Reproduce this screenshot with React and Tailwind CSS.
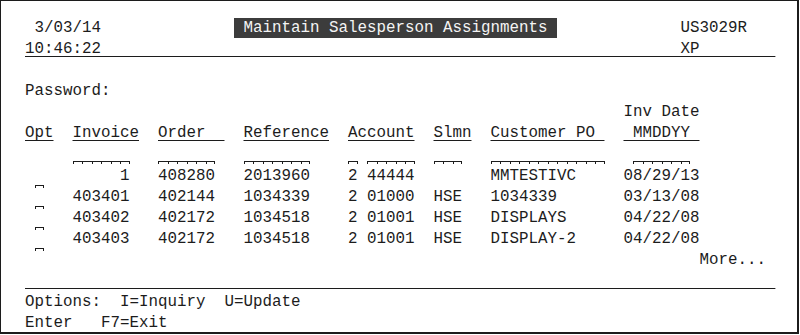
import React from "react";

// 5250-style green-screen grid: 9.5px per column, 21.1px per row
const line = (segs) => {
  let s = "";
  for (const [col, text] of segs) s = s.padEnd(col) + text;
  return s;
};

function Row({ children }) {
  return <div className="h-[21.1px] leading-[21.1px] whitespace-pre">{children}</div>;
}

function U({ children }) {
  return <span className="underline decoration-1 underline-offset-[3px]">{children}</span>;
}

// input field with column separator ticks
function Ticks({ n, top = "pt-[16px]" }) {
  return (
    <span className={`inline-flex h-[21.1px] align-top items-start ${top}`}>
      {Array.from({ length: n }).map((_, i) => (
        <span
          key={i}
          className={`h-[3px] w-[9.5px] border-t border-l border-[#1c1c1c] ${i === n - 1 ? "border-r" : ""}`}
        />
      ))}
    </span>
  );
}

const data = [
  ["     1", "408280", "2013960", "2 44444", "", "MMTESTIVC", "08/29/13"],
  ["403401", "402144", "1034339", "2 01000", "HSE", "1034339", "03/13/08"],
  ["403402", "402172", "1034518", "2 01001", "HSE", "DISPLAYS", "04/22/08"],
  ["403403", "402172", "1034518", "2 01001", "HSE", "DISPLAY-2", "04/22/08"],
];

export default function App() {
  return (
    <div className="w-[800px] h-[335px] bg-white">
      <div className="w-[799px] h-[334px] border border-r-2 border-b-2 border-[#1c1c1c] pl-[24px] pt-[17px] text-[#1c1c1c] text-[15.83px] font-['Liberation_Mono',monospace] overflow-hidden">
        <Row>
          {" 3/03/14".padEnd(22)}
          <span className="inline-block align-top h-[20px] leading-[21px] bg-[#3c3c3c] text-[#f4f4f4]">
            {" Maintain Salesperson Assignments "}
          </span>
          {"".padEnd(13)}US3029R
        </Row>
        <Row>
          <U>{line([[0, "10:46:22"], [69, "XP"]]).padEnd(79)}</U>
        </Row>
        <Row> </Row>
        <Row>Password:</Row>
        <Row>{line([[63, "Inv Date"]])}</Row>
        <Row>
          <U>Opt</U>{"  "}<U>Invoice</U>{"  "}<U>{"Order  "}</U>{"  "}<U>Reference</U>{"  "}
          <U>Account</U>{"  "}<U>Slmn</U>{"  "}<U>{"Customer PO "}</U>{"  "}<U>{" MMDDYY "}</U>
        </Row>
        <Row>
          {"     "}<Ticks n={6} />{"   "}<Ticks n={6} />{"   "}<Ticks n={7} />{"    "}
          <Ticks n={1} />{" "}<Ticks n={5} />{"  "}<Ticks n={3} />{"   "}<Ticks n={12} />{"   "}<Ticks n={6} />
        </Row>
        {data.map((r, i) => (
          <Row key={i}>
            {" "}
            <Ticks n={1} top="pt-[19px]" />
            {line([[5, r[0]], [14, r[1]], [23, r[2]], [34, r[3]], [43, r[4]], [49, r[5]], [63, r[6]]]).slice(2)}
          </Row>
        ))}
        <Row>{line([[71, "More..."]])}</Row>
        <Row>
          <U>{"".padEnd(79)}</U>
        </Row>
        <Row>{"Options:  I=Inquiry  U=Update"}</Row>
        <Row>{"Enter   F7=Exit"}</Row>
      </div>
    </div>
  );
}
